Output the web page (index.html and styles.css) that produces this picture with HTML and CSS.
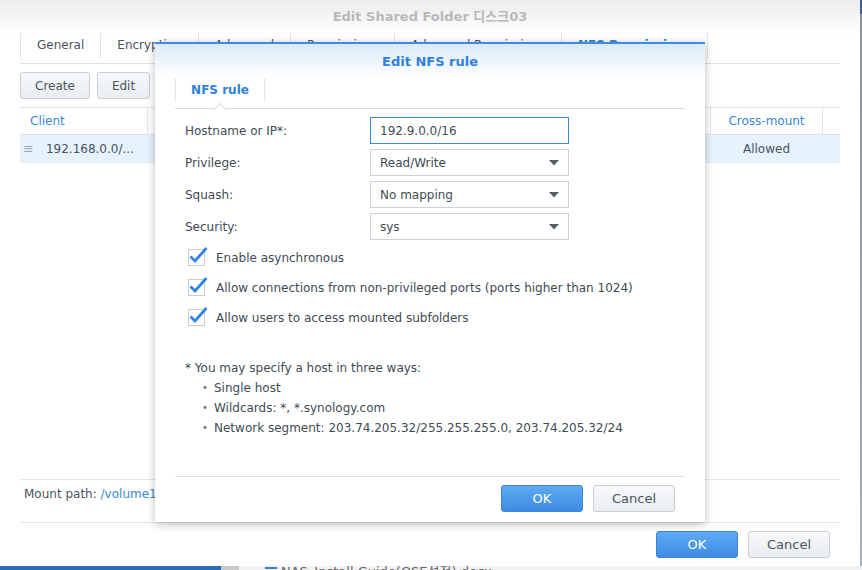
FILE: index.html
```html
<!DOCTYPE html>
<html>
<head>
<meta charset="utf-8">
<link rel="stylesheet" href="styles.css">
</head>
<body>
<div class="screen">
  <div class="desk">
    <div class="window">
      <div class="win-head">Edit Shared Folder 디스크03</div>
      <div class="win-body">
        <div class="tabs">
          <div class="tab">General</div>
          <div class="tab">Encryption</div>
          <div class="tab">Advanced</div>
          <div class="tab">Permissions</div>
          <div class="tab">Advanced Permissions</div>
          <div class="tab active">NFS Permissions</div>
        </div>
        <div class="toolbar">
          <button class="btn">Create</button>
          <button class="btn">Edit</button>
        </div>
        <div class="table">
          <div class="trow thead">
            <div class="c-client">Client</div>
            <div class="c-mid"></div>
            <div class="c-cross">Cross-mount</div>
            <div class="c-end"></div>
          </div>
          <div class="trow tsel">
            <div class="c-client"><span class="grip">≡</span>192.168.0.0/...</div>
            <div class="c-mid"></div>
            <div class="c-cross">Allowed</div>
            <div class="c-end"></div>
          </div>
        </div>
        <div class="spacer"></div>
        <div class="mount">Mount path: <span class="link">/volume1/디스크03</span></div>
        <div class="win-foot">
          <button class="btn primary">OK</button>
          <button class="btn">Cancel</button>
        </div>
      </div>
    </div>
    <div class="desk-edge"></div>
  </div>
  <div class="taskbar">
    <div class="tb-blue"></div>
    <div class="tb-gray"></div>
    <div class="tb-file"><span class="tb-icon"></span><span class="tb-name">NAS_Install Guide(OSE설정).docx</span></div>
  </div>

  <div class="modal">
    <div class="m-head">Edit NFS rule</div>
    <div class="m-body">
      <div class="m-tabs">
        <div class="m-tab">NFS rule</div>
      </div>
      <div class="form">
        <label class="lbl">Hostname or IP*:</label>
        <div class="field input">192.9.0.0/16</div>
        <label class="lbl">Privilege:</label>
        <div class="field select">Read/Write<svg class="arrow" width="10" height="6" viewBox="0 0 10 6"><path d="M0 0H10L5 5.5Z" fill="#555e69"/></svg></div>
        <label class="lbl">Squash:</label>
        <div class="field select">No mapping<svg class="arrow" width="10" height="6" viewBox="0 0 10 6"><path d="M0 0H10L5 5.5Z" fill="#555e69"/></svg></div>
        <label class="lbl">Security:</label>
        <div class="field select">sys<svg class="arrow" width="10" height="6" viewBox="0 0 10 6"><path d="M0 0H10L5 5.5Z" fill="#555e69"/></svg></div>
      </div>
      <div class="checks">
        <div class="chk"><svg width="20" height="20" viewBox="0 0 20 20"><rect x="0.5" y="3.5" width="16" height="16" fill="#fff" stroke="#c8cdd3"/><path d="M2.5 10.5L7 15L18.5 2" fill="none" stroke="#2f86e0" stroke-width="2.8"/></svg><span>Enable asynchronous</span></div>
        <div class="chk"><svg width="20" height="20" viewBox="0 0 20 20"><rect x="0.5" y="3.5" width="16" height="16" fill="#fff" stroke="#c8cdd3"/><path d="M2.5 10.5L7 15L18.5 2" fill="none" stroke="#2f86e0" stroke-width="2.8"/></svg><span>Allow connections from non-privileged ports (ports higher than 1024)</span></div>
        <div class="chk"><svg width="20" height="20" viewBox="0 0 20 20"><rect x="0.5" y="3.5" width="16" height="16" fill="#fff" stroke="#c8cdd3"/><path d="M2.5 10.5L7 15L18.5 2" fill="none" stroke="#2f86e0" stroke-width="2.8"/></svg><span>Allow users to access mounted subfolders</span></div>
      </div>
      <div class="notes">
        <div>* You may specify a host in three ways:</div>
        <ul>
          <li>Single host</li>
          <li>Wildcards: *, *.synology.com</li>
          <li>Network segment: 203.74.205.32/255.255.255.0, 203.74.205.32/24</li>
        </ul>
      </div>
    </div>
    <div class="m-foot">
      <button class="btn primary">OK</button>
      <button class="btn">Cancel</button>
    </div>
  </div>
</div>
</body>
</html>
```
FILE: styles.css
```css
* { box-sizing: border-box; }
html, body { margin: 0; padding: 0; }
body {
  width: 862px; height: 570px; overflow: hidden;
  font-family: "DejaVu Sans", Verdana, "Noto Sans CJK KR", sans-serif;
  font-size: 12px; color: #4b545e; background: #fff;
}
.screen { position: relative; width: 862px; height: 570px; overflow: hidden; }
.desk { display: flex; height: 566px; }
.window { width: 860px; height: 566px; display: flex; flex-direction: column; background: #fff; }
.desk-edge { width: 2px; background: linear-gradient(#3d5f8c 0, #3d5f8c 14px, #8a939c 14px, #a8afb6 100%); }
.win-head {
  height: 33px; line-height: 33px; text-align: center;
  font-weight: bold; font-size: 13px; color: #b8b9bb;
  background: linear-gradient(#ececec, #fdfdfd);
}
.win-body { flex: 1; display: flex; flex-direction: column; padding: 0 20px; }
.tabs { display: flex; height: 31px; border-bottom: 1px solid #dcdfe3; }
.tab {
  padding: 1px 16px 0; line-height: 22px; height: 26px; font-size: 12px; color: #4b545e;
  border-left: 1px solid #e1e4e8;
}
.tab:last-child { border-right: 1px solid #e1e4e8; }
.tab.active { color: #2f80dc; font-weight: bold; }
.toolbar { display: flex; gap: 7px; margin-top: 8px; }
.btn {
  font-family: inherit; font-size: 12px; color: #4b545e;
  height: 27px; padding: 0 14px; border-radius: 3px;
  border: 1px solid #c9ced5; background: linear-gradient(#f7f8fa, #e9edf1);
}
.btn.primary {
  color: #fff; border-color: #3f84d6;
  background: linear-gradient(#5eaaf3, #3f8be3);
}
.table { margin-top: 8px; border-top: 1px solid #dfe3e8; }
.trow { display: flex; }
.thead { height: 27px; border-bottom: 1px solid #dfe3e8; line-height: 27px; color: #3a87d8; }
.tsel { height: 28px; line-height: 28px; background: #e6f2fc; color: #4b545e; border-bottom: 1px solid #e9eef3; }
.c-client { width: 128px; padding-left: 10px; white-space: nowrap; overflow: hidden; }
.thead .c-client { border-right: 1px solid #e1e6ec; }
.c-mid { width: 562px; }
.c-cross { width: 113px; text-align: center; }
.thead .c-cross { border-left: 1px solid #e1e6ec; border-right: 1px solid #e1e6ec; }
.c-end { flex: 1; }
.grip { color: #9aa3ac; margin-left: -7px; margin-right: 12px; font-size: 13px; }
.spacer { flex: 1; }
.mount {
  height: 44px; padding: 7px 4px 0; line-height: 15px;
  border-top: 1px solid #e6e9ed; border-bottom: 1px solid #e6e9ed;
}
.link { color: #3a87d8; }
.win-foot { display: flex; justify-content: flex-end; gap: 10px; padding: 8px 10px 0 0; height: 43px; }
.win-foot .btn, .m-foot .btn { width: 82px; padding: 0; font-size: 13px; }
.taskbar { display: flex; height: 4px; overflow: hidden; background: #f2f2f2; }
.tb-blue { width: 221px; background: #2e6bb6; }
.tb-gray { width: 18px; background: #c9c9c9; }
.tb-file { padding-left: 26px; font-size: 13px; color: #666; white-space: nowrap; display: flex; gap: 4px; }
.tb-name { line-height: 10px; margin-top: 1px; }
.tb-icon { width: 12px; height: 2px; margin-top: 1px; background: #3a7dd0; }

.modal {
  position: absolute; left: 155px; top: 42px; width: 550px; height: 480px;
  background: #fff; border-top: 2px solid #3f8ae2;
  box-shadow: 0 2px 8px rgba(0,0,0,0.28);
  display: flex; flex-direction: column;
}
.m-head {
  height: 34px; line-height: 35px; text-align: center;
  font-weight: bold; font-size: 13px; color: #2f80dc;
  background: linear-gradient(#dbeaf9, #ffffff);
}
.m-body { flex: 1; margin: 0 20px; border-bottom: 1px solid #dcdfe3; }
.m-tabs { height: 31px; border-bottom: 1px solid #d9dce0; display: flex; }
.m-tab {
  position: relative; width: 90px; height: 24px; line-height: 25px; text-align: center;
  font-weight: bold; color: #2f80dc; font-size: 12px;
  border-left: 1px solid #e1e4e8; border-right: 1px solid #e1e4e8;
}
.m-tab::after {
  content: ""; position: absolute; left: 39px; top: 27px; width: 9px; height: 9px;
  background: #fff; border-left: 1px solid #d9dce0; border-top: 1px solid #d9dce0;
  transform: rotate(45deg);
}
.form {
  display: grid; grid-template-columns: 185px 199px; row-gap: 5px;
  padding: 8px 0 0 10px;
}
.lbl { height: 27px; line-height: 28px; color: #414b55; }
.field {
  height: 27px; line-height: 26px; padding: 0 9px; border: 1px solid #cdd1d6;
  color: #414b55; position: relative;
}
.field.input { border-color: #3a87d8; }
.arrow { position: absolute; right: 9px; top: 10px; }
.checks { display: flex; flex-direction: column; gap: 10px; padding: 8px 0 0 13px; }
.chk { display: flex; align-items: center; height: 20px; gap: 8px; color: #414b55; }
.chk svg { margin-top: -4px; flex: none; }
.notes { padding: 30px 0 0 10px; line-height: 20px; color: #414b55; }
.notes ul { margin: 0; padding: 0 0 0 29px; list-style: none; }
.notes li { position: relative; }
.notes li::before { content: "•"; position: absolute; left: -12px; color: #6b737c; font-size: 10px; }
.m-foot { height: 45px; display: flex; justify-content: flex-end; gap: 10px; padding: 8px 30px 0 0; }
```
